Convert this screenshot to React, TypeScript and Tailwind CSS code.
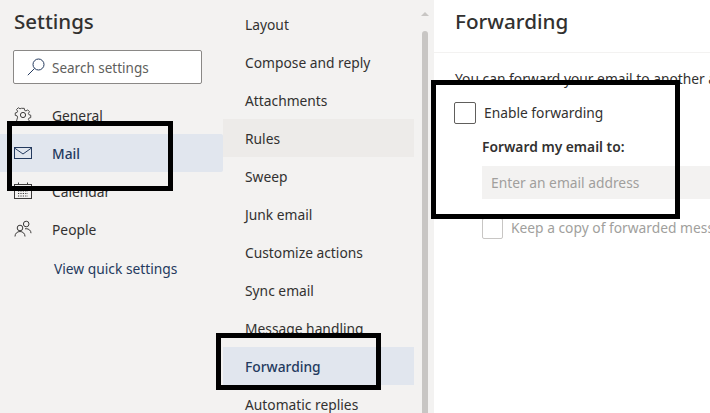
import React from 'react';

const font = "font-['Noto_Sans',sans-serif]";

const SearchIcon = () => (
  <svg width="18" height="18" viewBox="0 0 18 18" fill="none" stroke="#243a5e" strokeWidth="1">
    <circle cx="11.500" cy="6.500" r="5.500" />
    <path d="M7.500 10.500L0.800 17.200" />
  </svg>
);

const GearIcon = () => (
  <svg width="18" height="18" viewBox="0 0 18 18" fill="none" stroke="#3b3a39" strokeWidth="1">
    <circle cx="9" cy="9" r="2.6" />
    <path d="M7.6 1.6h2.8l.4 2.2 1.5.7 1.9-1.2 2 2-1.2 1.9.6 1.5 2 .5v2.7l-2 .5-.6 1.5 1.2 1.9-2 2-1.9-1.2-1.5.6-.4 2H7.6l-.4-2-1.5-.6-1.9 1.2-2-2L3 11.4l-.6-1.5-2-.5V6.7l2-.5L3 4.7 1.8 2.9l2-2 1.9 1.2 1.5-.6z" transform="translate(0.9 0.9) scale(0.9)" />
  </svg>
);

const MailIcon = () => (
  <svg width="18" height="14" viewBox="0 0 18 14" fill="none" stroke="#243a5e" strokeWidth="1">
    <rect x="0.5" y="1.5" width="17" height="11" />
    <path d="M0.5 2l8.5 6 8.5-6" />
  </svg>
);

const CalendarIcon = () => (
  <svg width="18" height="18" viewBox="0 0 18 18" fill="none" stroke="#3b3a39" strokeWidth="1">
    <rect x="0.5" y="2.5" width="17" height="14" />
    <path d="M0.5 6.5h17M4.5 0.5v2M13.5 0.5v2" />
    <path d="M4 9h10M4 11.5h10M4 14h10" strokeDasharray="1.2 1.2" />
  </svg>
);

const PeopleIcon = () => (
  <svg width="18" height="18" viewBox="0 0 18 18" fill="none" stroke="#3b3a39" strokeWidth="1">
    <circle cx="6" cy="8" r="2.8" />
    <circle cx="12.2" cy="4" r="2.8" />
    <path d="M1 16.5c0-3 2.2-5 5-5s5 2 5 5M11 8.8c.4-.1.8-.1 1.2-.1 2.6 0 4.8 1.800 4.800 4.500" />
  </svg>
);

const navItems = [
  { label: 'General', icon: <GearIcon /> },
  { label: 'Mail', icon: <MailIcon />, active: true },
  { label: 'Calendar', icon: <CalendarIcon /> },
  { label: 'People', icon: <PeopleIcon /> },
];

const subItems = [
  'Layout',
  'Compose and reply',
  'Attachments',
  'Rules',
  'Sweep',
  'Junk email',
  'Customize actions',
  'Sync email',
  'Message handling',
  'Forwarding',
  'Automatic replies',
];

export default function App() {
  return (
    <div className={`relative flex h-[413px] w-[710px] overflow-hidden bg-white text-[#323130] ${font}`}>
      {/* Left nav */}
      <div className="w-[223px] shrink-0 bg-[#f3f2f1]">
        <h1 className="pl-[14px] pt-[5px] text-[20.5px] leading-[32px] font-medium">Settings</h1>
        <div className="mx-[13px] mt-[13px] flex h-[34px] w-[189px] items-center gap-[7px] rounded-[2px] border border-[#8a8886] bg-white pl-[13px] text-[13.5px] text-[#605e5c]">
          <SearchIcon />
          <span className="pt-[2px]">Search settings</span>
        </div>
        <nav className="mt-[12px]">
          {navItems.map(item => (
            <div
              key={item.label}
              className={`flex h-[38px] items-center rounded-r-[2px] ${item.active ? 'bg-[#e1e6ee] font-medium text-[#243a5e]' : ''}`}
            >
              <span className="flex w-[52px] justify-center pl-[2px] pr-[8px]">{item.icon}</span>
              <span className="pt-[2px] text-[13.8px]">{item.label}</span>
            </div>
          ))}
        </nav>
        <div className="mt-[2px] pl-[54px] text-[13.8px] leading-[38px] text-[#243a5e]">View quick settings</div>
      </div>

      {/* Sub nav */}
      <div className="relative w-[211px] shrink-0 bg-[#f3f2f1] pt-[5px]">
        {subItems.map(item => (
          <div
            key={item}
            className={`flex h-[38px] w-[191px] items-center pl-[22px] pt-[2px] text-[13.8px] ${item === 'Rules' ? 'bg-[#edebe9]' : ''} ${item === 'Forwarding' ? 'bg-[#e1e6ee] font-medium text-[#243a5e]' : ''}`}
          >
            {item}
          </div>
        ))}
        {/* scrollbar */}
        <div className="absolute right-[5px] top-[12px] h-0 w-0 border-x-[4px] border-b-[4px] border-x-transparent border-b-[#c8c6c4]" />
        <div className="absolute right-[6px] top-[31px] bottom-0 w-[6px] rounded-t-[3px] bg-[#c8c6c4]" />
      </div>

      {/* Content */}
      <div className="min-w-0 flex-1">
        <div className="flex h-[53px] items-center border-b border-[#f3f2f1] pb-[9px] pl-[21px] text-[20.7px] font-medium">
          Forwarding
        </div>
        <div className="whitespace-nowrap pl-[21px] pt-[16px] text-[13.8px] leading-[20px]">
          You can forward your email to another account.
        </div>
        <label className="mt-[13px] flex items-center gap-[8px] pl-[20px] text-[13.8px]">
          <span className="h-[22px] w-[22px] rounded-[2px] border border-[#605e5c] bg-white" />
          Enable forwarding
        </label>
        <div className="mt-[13px] pl-[48px] text-[13.8px] leading-[20px] font-semibold">Forward my email to:</div>
        <div className="ml-[48px] mt-[9px] flex h-[33px] items-center bg-[#f3f2f1] pl-[9px] pt-[2px] text-[13.8px] whitespace-nowrap text-[#a19f9d]">
          Enter an email address
        </div>
        <label className="mt-[19px] flex items-center gap-[8px] whitespace-nowrap pl-[48px] text-[13.8px] text-[#a19f9d]">
          <span className="h-[21px] w-[21px] shrink-0 rounded-[2px] border border-[#c8c6c4] bg-white" />
          Keep a copy of forwarded messages
        </label>
      </div>

      {/* Annotation boxes on the screenshot */}
      <div className="absolute left-[7px] top-[121px] h-[70px] w-[166px] border-[5px] border-black" />
      <div className="absolute left-[216px] top-[333px] h-[57px] w-[165px] border-[5px] border-black" />
      <div className="absolute left-[431px] top-[80px] h-[139px] w-[249px] border-[5px] border-black" />
    </div>
  );
}
